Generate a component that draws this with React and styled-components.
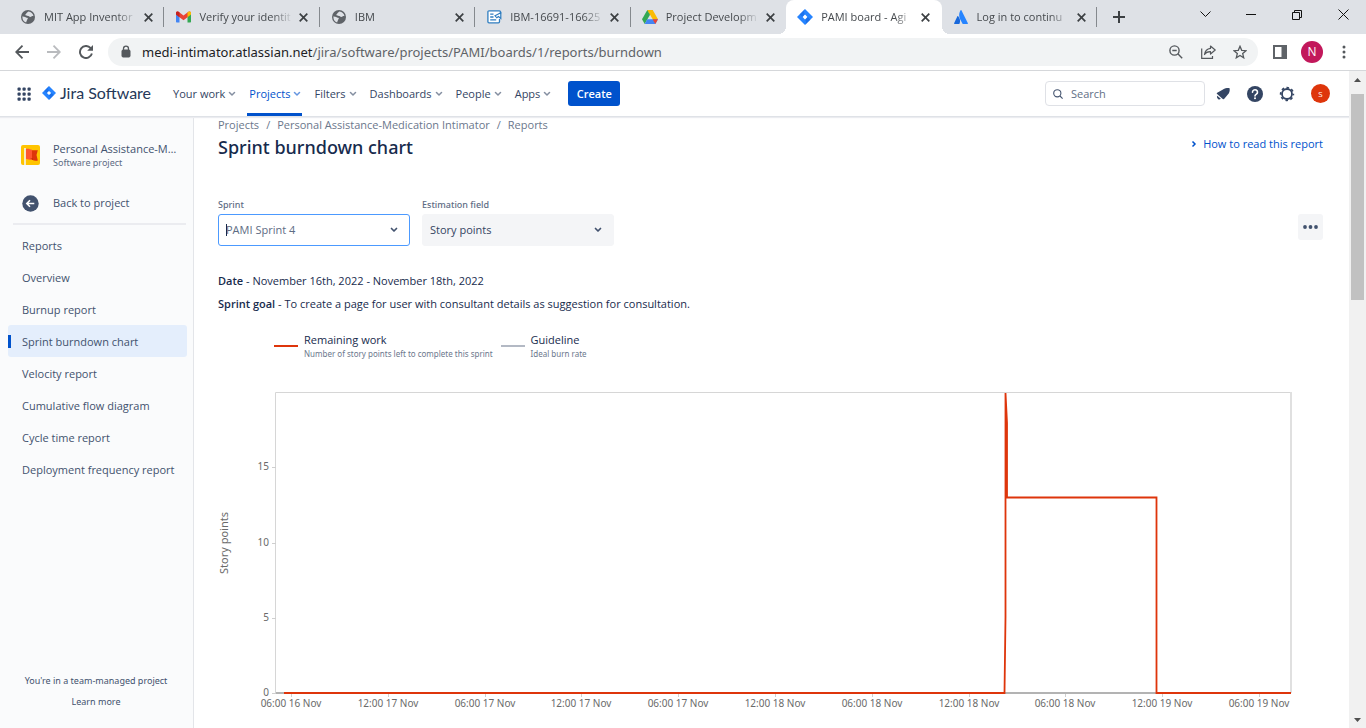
import React from "react";
import styled, { createGlobalStyle, css } from "styled-components";

const wideFont = `"Noto Sans", "Open Sans", sans-serif`;

const GlobalStyle = createGlobalStyle`
  *, *::before, *::after { box-sizing: border-box; }
  body {
    margin: 0;
    font-family: "Open Sans", "Noto Sans", sans-serif;
    font-size: 11px;
    line-height: 16px;
    color: #172b4d;
    background: #fff;
  }
  button, input, select { font: inherit; color: inherit; }
  a { color: inherit; text-decoration: none; }
  svg { display: block; flex: none; }
`;

const plainButton = css`
  display: flex;
  align-items: center;
  justify-content: center;
  padding: 0;
  border: 0;
  background: none;
  flex: none;
`;

const Window = styled.div`
  display: flex;
  flex-direction: column;
  height: 100vh;
  overflow: hidden;
`;

/* ---------- Browser tab strip ---------- */

const TabStrip = styled.header`
  display: flex;
  height: 34px;
  flex: none;
  padding-left: 9px;
  background: #dee1e6;
  color: #45494d;
`;

const TabList = styled.div`
  display: grid;
  grid-template-columns: repeat(7, minmax(0, 1fr));
  flex: 0 1 1088px;
`;

const Tab = styled.div`
  position: relative;
  display: flex;
  align-items: center;
  padding: 0 9px 0 11px;
  background: ${(p) => (p.$active ? "#fff" : "transparent")};
  border-radius: 8px 8px 0 0;
  ${(p) =>
    p.$active &&
    css`
      &::before,
      &::after {
        content: "";
        position: absolute;
        bottom: 0;
        width: 8px;
        height: 8px;
      }
      &::before {
        left: -8px;
        background: radial-gradient(circle at 0 0, transparent 8px, #fff 8px);
      }
      &::after {
        right: -8px;
        background: radial-gradient(circle at 100% 0, transparent 8px, #fff 8px);
      }
    `}
  ${(p) =>
    p.$divider &&
    css`
      &::after {
        content: "";
        position: absolute;
        right: 0;
        top: 7px;
        width: 1px;
        height: 20px;
        background: #85898e;
      }
    `}
`;

const TabIcon = styled.span`
  display: flex;
  justify-content: center;
  width: 16px;
  flex: none;
`;

const TabTitle = styled.span`
  flex: 1;
  min-width: 0;
  margin: 0 4px 0 8px;
  overflow: hidden;
  white-space: nowrap;
  mask-image: linear-gradient(to right, #000 78%, transparent);
`;

const TabClose = styled.button`
  ${plainButton}
  width: 14px;
  height: 14px;
`;

const NewTab = styled.button`
  ${plainButton}
  width: 44px;
`;

const WindowControls = styled.div`
  display: flex;
  margin-left: auto;
`;

const WindowButton = styled.button`
  ${plainButton}
  width: 46px;
  height: 29px;
  color: #111;
`;

/* ---------- Browser toolbar ---------- */

const Toolbar = styled.div`
  display: flex;
  align-items: center;
  height: 37px;
  flex: none;
  padding: 0 6px;
  border-bottom: 1px solid #d5d7da;
  color: #5f6368;
`;

const ToolButton = styled.button`
  ${plainButton}
  width: 32px;
  height: 28px;
  color: ${(p) => (p.$muted ? "#b9bbbe" : "#54585c")};
`;

const AddressBar = styled.div`
  display: flex;
  align-items: center;
  flex: 1;
  min-width: 0;
  height: 28px;
  margin: 0 6px;
  padding: 0 2px 0 12px;
  border-radius: 14px;
  background: #f1f3f4;
`;

const Url = styled.span`
  flex: 1;
  min-width: 0;
  margin-left: 10px;
  overflow: hidden;
  white-space: nowrap;
  font-family: ${wideFont};
  font-size: 13px;
  line-height: 20px;
  b {
    font-weight: 400;
    color: #202124;
  }
`;

const Avatar = styled.span`
  display: flex;
  align-items: center;
  justify-content: center;
  width: ${(p) => p.$size}px;
  height: ${(p) => p.$size}px;
  border-radius: 50%;
  background: ${(p) => p.$color};
  color: #fff;
  font-size: ${(p) => p.$text}px;
  font-weight: 500;
`;

/* ---------- Page frame ---------- */

const Viewport = styled.div`
  display: flex;
  flex: 1;
  min-height: 0;
`;

const Page = styled.div`
  display: flex;
  flex-direction: column;
  flex: 1;
  min-width: 0;
`;

const Scrollbar = styled.div`
  display: flex;
  flex-direction: column;
  align-items: center;
  width: 17px;
  flex: none;
  background: #f1f1f1;
`;

const ScrollArrow = styled.button`
  ${plainButton}
  width: 17px;
  height: 17px;
`;

const ScrollTrack = styled.div`
  flex: 1;
  padding-top: 6px;
`;

const ScrollThumb = styled.div`
  width: 13px;
  height: 206px;
  background: #c1c1c1;
`;

/* ---------- Jira navigation ---------- */

const NavBar = styled.nav`
  position: relative;
  z-index: 1;
  display: flex;
  align-items: center;
  height: 46px;
  flex: none;
  padding: 0 11px 0 16px;
  background: #fff;
  border-bottom: 1px solid #dfe2e7;
  box-shadow: 0 1px 1px #ebecf0;
  color: #344563;
`;

const AppSwitcher = styled.button`
  ${plainButton}
  width: 16px;
`;

const Brand = styled.a`
  display: flex;
  align-items: center;
  gap: 4px;
  margin: 0 18px 0 10px;
  padding-bottom: 2px;
  font-family: Lato, sans-serif;
  font-size: 16px;
  color: #253858;
  white-space: nowrap;
`;

const NavItem = styled.button`
  ${plainButton}
  position: relative;
  gap: 3px;
  height: 45px;
  padding: 0 1px 0 4px;
  margin-right: 8px;
  white-space: nowrap;
  color: ${(p) => (p.$active ? "#0052cc" : "#344563")};
  ${(p) =>
    p.$active &&
    css`
      &::after {
        content: "";
        position: absolute;
        left: 2px;
        right: 0;
        bottom: 0;
        height: 3px;
        background: #0052cc;
      }
    `}
  svg { opacity: 0.6; }
`;

const CreateButton = styled.button`
  ${plainButton}
  width: 52px;
  height: 25px;
  margin-left: 8px;
  border-radius: 3px;
  background: #0052cc;
  color: #fff;
  font-weight: 600;
`;

const SearchBox = styled.label`
  display: flex;
  align-items: center;
  gap: 8px;
  width: 160px;
  height: 25px;
  margin-left: auto;
  margin-right: 2px;
  padding: 0 7px;
  border: 1px solid #dfe1e6;
  border-radius: 4px;
  color: #44546f;
  input {
    flex: 1;
    min-width: 0;
    padding: 0;
    border: 0;
    outline: 0;
    background: none;
  }
  input::placeholder {
    color: #626f86;
    opacity: 1;
  }
`;

const NavIcon = styled.button`
  ${plainButton}
  width: 32px;
  height: 32px;
  color: #344563;
  &:last-child { width: 35px; }
`;

/* ---------- Sidebar ---------- */

const Body = styled.div`
  display: flex;
  flex: 1;
  min-height: 0;
`;

const Sidebar = styled.aside`
  display: flex;
  flex-direction: column;
  width: 194px;
  flex: none;
  padding: 23px 6px 18px 8px;
  background: #fafbfc;
  border-right: 1px solid #e3e5e9;
  color: #42526e;
`;

const Project = styled.div`
  display: flex;
  align-items: center;
  gap: 13px;
  height: 30px;
  padding: 0 10px 0 13px;
`;

const ProjectText = styled.div`
  min-width: 0;
  line-height: 14px;
`;

const ProjectName = styled.div`
  overflow: hidden;
  text-overflow: ellipsis;
  white-space: nowrap;
  font-weight: 500;
  line-height: 16px;
`;

const ProjectKind = styled.div`
  font-family: ${wideFont};
  font-size: 9px;
  line-height: 12px;
  color: #5e6c84;
`;

const BackLink = styled.a`
  display: flex;
  align-items: center;
  gap: 14px;
  height: 32px;
  margin-top: 17px;
  padding-left: 14px;
`;

const Rule = styled.hr`
  width: 173px;
  height: 2px;
  margin: 4px 0 4px 5px;
  border: 0;
  background: #ebecf0;
`;

const sideRow = css`
  padding: 9px 8px 7px 14px;
`;

const SideHeading = styled.h2`
  ${sideRow}
  margin: 0;
  font-size: 11px;
  font-weight: 500;
`;

const SideLink = styled.a`
  ${sideRow}
  position: relative;
  display: block;
  border-radius: 3px;
  background: ${(p) => (p.$active ? "#e4eefc" : "transparent")};
  ${(p) =>
    p.$active &&
    css`
      &::before {
        content: "";
        position: absolute;
        left: 0;
        top: 10px;
        bottom: 9px;
        width: 3px;
        background: #0052cc;
      }
    `}
`;

const SideFooter = styled.footer`
  display: flex;
  flex-direction: column;
  align-items: center;
  gap: 5px;
  margin-top: auto;
  padding-right: 3px;
  font-family: ${wideFont};
  font-size: 9px;
  white-space: nowrap;
`;

/* ---------- Report ---------- */

const Main = styled.main`
  flex: 1;
  min-width: 0;
  padding: 0 24px;
  overflow: hidden;
`;

const Crumbs = styled.div`
  display: flex;
  gap: 7px;
  color: #6b778c;
`;

const TitleRow = styled.div`
  display: flex;
  align-items: center;
  justify-content: space-between;
  margin-top: 2px;
  padding-right: 2px;
`;

const Title = styled.h1`
  margin: 0;
  font-family: ${wideFont};
  font-size: 18px;
  font-weight: 500;
  line-height: 24px;
`;

const HelpLink = styled.button`
  ${plainButton}
  gap: 6px;
  height: 18px;
  align-self: flex-start;
  color: #0052cc;
`;

const Filters = styled.div`
  display: flex;
  align-items: flex-end;
  gap: 12px;
  margin-top: 38px;
`;

const Field = styled.div`
  width: 192px;
  label {
    display: block;
    font-family: ${wideFont};
    font-size: 9px;
    font-weight: 500;
    line-height: 16px;
    color: #5e6c84;
  }
`;

const SelectWrap = styled.div`
  position: relative;
  display: flex;
  align-items: center;
  margin-top: 1px;
  select {
    appearance: none;
    width: 100%;
    height: 32px;
    padding: 0 28px 0 7px;
    border: 1px solid ${(p) => (p.$focused ? "#4c9aff" : "#f4f5f7")};
    border-radius: 3px;
    outline: 0;
    background: ${(p) => (p.$focused ? "#fff" : "#f4f5f7")};
    color: ${(p) => (p.$focused ? "#5e6c84" : "#344563")};
  }
  svg {
    position: absolute;
    right: 12px;
    color: #42526e;
    pointer-events: none;
  }
`;

const Caret = styled.span`
  position: absolute;
  left: 8px;
  width: 1px;
  height: 12px;
  background: #172b4d;
`;

const MoreButton = styled.button`
  ${plainButton}
  width: 25px;
  height: 26px;
  margin: 0 2px 6px auto;
  border-radius: 3px;
  background: #f4f5f7;
`;

const Fact = styled.p`
  margin: ${(p) => p.$top}px 0 0;
  b { font-weight: 600; }
`;

const Legend = styled.ul`
  display: flex;
  gap: 8px;
  margin: 20px 0 0;
  padding: 0 0 0 56px;
  list-style: none;
`;

const LegendItem = styled.li`
  display: flex;
  gap: 6px;
  &::before {
    content: "";
    width: 24px;
    height: 2px;
    margin-top: 13px;
    background: ${(p) => p.$color};
  }
`;

const LegendName = styled.div`
  font-weight: 500;
`;

const LegendNote = styled.div`
  font-family: ${wideFont};
  font-size: 8px;
  line-height: 12px;
  color: #6b778c;
`;

const ChartSvg = styled.svg`
  width: 100%;
  height: auto;
  margin-top: 25px;
  font-family: ${wideFont};
  font-size: 10px;
  fill: #6a6a6a;
`;

/* ---------- Drawings ---------- */

const Globe = () => (
  <svg width="14" height="14" viewBox="0 0 14 14">
    <circle cx="7" cy="7" r="7" fill="#5f6368" />
    <path d="M7.6 1.6c-1 .3-1.2 1-2 1.3-.5.3-.2 1-.9 1.3-.8.3-.3 1.3.5 1.2.9-.1 1.3.7 2.2.6.8 0 .9 1.1 1.8 1 1.3-.2 1.5-1 2.6-.9.6 0 .8.5.7 1.2A5.6 5.6 0 0 0 9.300 1.900z" fill="#dee1e6" />
    <path d="M1.500 6.200c1 .1 1.500.7 2.500.7s1.300.8 2.200.9c.8.1.8 1 .2 1.500-.5.5-.2 1.100-.8 1.700l-.5 1.400A5.600 5.600 0 0 1 1.500 6.200z" fill="#dee1e6" />
  </svg>
);

const Gmail = () => (
  <svg width="15" height="12" viewBox="0 0 15 12">
    <path d="M0 2v8.500c0 .6.400 1 1 1h2.500V4z" fill="#4285f4" />
    <path d="M15 2v8.500c0 .6-.400 1-1 1h-2.500V4z" fill="#34a853" />
    <path d="M0 2C0 .5 1.500 0 2.600.8L7.500 4.500l4.900-3.700C13.500 0 15 .5 15 2l-3.500 4.200-4 3-4-3L0 3.500z" fill="#ea4335" />
    <path d="M0 2v1.500l3.500 2.700V1.500C2 0 0 .5 0 2z" fill="#c5221f" />
    <path d="M15 2v1.500l-3.500 2.700V1.500C13 0 15 .5 15 2z" fill="#fbbc04" />
  </svg>
);

const DocIcon = () => (
  <svg width="15" height="14" viewBox="0 0 15 14" fill="none" stroke="#2f7dc0" strokeWidth="1.300">
    <path d="M13.500 4V1.900c0-.7-.4-1.100-1.100-1.100H2C1.300.8.900 1.200.9 1.900v9.900c0 .7.400 1.100 1.100 1.100h9.400c.7 0 1.100-.4 1.100-1.100V9" fill="#fff" />
    <path d="M3.200 4.200h3.300M3.200 7h3.300M3.200 9.800h6" />
    <path d="M8 5.800 13.800 2.800v5.600L11.500 6.500 9.800 7.800z" strokeWidth="1.200" />
  </svg>
);

const Drive = () => (
  <svg width="16" height="14" viewBox="0 0 16 14">
    <path d="M5.300 0h5.400L8 4.800z" fill="#188038" />
    <path d="M5.300 0 8 4.700 2.700 14 0 9.300z" fill="#34a853" />
    <path d="M10.700 0 16 9.300h-5.300L5.300 0z" fill="#fbbc04" />
    <path d="M5.300 9.300H16L13.300 14H2.700z" fill="#4285f4" />
    <path d="M10.600 9.300H16L13.300 14z" fill="#ea4335" />
  </svg>
);

const JiraMark = ({ size = 14 }) => (
  <svg width={size} height={size} viewBox="0 0 14 14">
    <path d="M7 0 14 7 7 14 0 7z" fill="#2684ff" />
    <path d="M7 0c-1.300 1.500-1.200 3.200 0 4.600L4.600 7 2.300 4.700z" fill="#0d5bd6" opacity=".4" />
    <path d="M7 14c1.300-1.500 1.200-3.200 0-4.600L9.400 7l2.300 2.300z" fill="#0d5bd6" opacity=".5" />
    <path d="M7 4.900 9.100 7 7 9.100 4.900 7z" fill="#fff" />
  </svg>
);

const Atlassian = () => (
  <svg width="14" height="14" viewBox="0 0 14 14">
    <path d="M4.200 6.300c-.2-.3-.6-.3-.8 0L.1 13.300c-.1.300.1.600.4.600h4.700c.2 0 .300-.1.400-.3 1-2.100.4-5.300-1.400-7.300z" fill="#1868db" />
    <path d="M6.600.3C4.700 3.300 4.800 6.600 6.100 9.200l2.300 4.400c.1.200.200.300.400.300h4.700c.3 0 .5-.3.400-.6L7.400.3c-.2-.400-.6-.400-.8 0z" fill="#2684ff" />
  </svg>
);

const Cross = () => (
  <svg width="9" height="9" viewBox="0 0 9 9" stroke="#3c4043" strokeWidth="1.700">
    <path d="m.7.700 7.600 7.600M8.300.700.700 8.300" />
  </svg>
);

const Chevron = ({ width = 1.7 }) => (
  <svg width="8" height="6" viewBox="0 0 8 6" fill="none" stroke="currentColor" strokeWidth={width} strokeLinecap="round" strokeLinejoin="round">
    <path d="m1.500 1.500 2.500 2.500 2.500-2.500" />
  </svg>
);

const GearIcon = () => (
  <svg width="16" height="16" viewBox="0 0 16 16" fill="none" stroke="#344563">
    <circle cx="8" cy="8" r="5" strokeWidth="1.800" />
    <circle cx="8" cy="8" r="6.400" strokeWidth="1.600" strokeDasharray="2.600 2.427" strokeDashoffset="1.300" />
  </svg>
);

/* ---------- Chart ---------- */

const PLOT = { left: 58, right: 1073, top: 7, bottom: 308 };
const xLabels = [
  "06:00 16 Nov", "12:00 17 Nov", "06:00 17 Nov", "12:00 17 Nov", "06:00 17 Nov", "12:00 18 Nov",
  "06:00 18 Nov", "12:00 18 Nov", "06:00 18 Nov", "12:00 19 Nov", "06:00 19 Nov",
];
const yLabels = [0, 5, 10, 15];

const tickX = (i) => Math.round(73 + i * 96.8);
const tickY = (v) => Math.round(PLOT.bottom - v * 15.05);

function BurndownChart() {
  return (
    <ChartSvg viewBox="0 0 1107 330" role="img" aria-label="Sprint burndown chart">
      <path
        d={`M${PLOT.left - 1}.5 ${PLOT.bottom}V${PLOT.top}.5H${PLOT.right}`}
        fill="none"
        stroke="#d6d6d6"
      />
      <path d={`M${PLOT.right} ${PLOT.top}V${PLOT.bottom}`} stroke="#e0e0e0" strokeWidth="2" />
      <path d="M58 308H1073" stroke="#b3b3b3" strokeWidth="2" />
      {yLabels.map((v) => (
        <g key={v}>
          <path d={`M54 ${tickY(v)}.5H58`} stroke="#cfcfcf" />
          <text x="51" y={tickY(v) + 3} textAnchor="end">{v}</text>
        </g>
      ))}
      {xLabels.map((label, i) => (
        <g key={i}>
          <path d={`M${tickX(i)}.5 309V312`} stroke="#cfcfcf" />
          <text x={tickX(i)} y="322" textAnchor="middle">{label}</text>
        </g>
      ))}
      <text transform="translate(10 158) rotate(-90)" textAnchor="middle" fontSize="11">Story points</text>
      <path
        d="M66 308H786.500L787.500 232V8L789 38V112.500H938.500V308H1073"
        fill="none"
        stroke="#de350b"
        strokeWidth="1.800"
      />
    </ChartSvg>
  );
}

const tabs = [
  { title: "MIT App Inventor", icon: <Globe />, divider: true },
  { title: "Verify your identit", icon: <Gmail />, divider: true },
  { title: "IBM", icon: <Globe />, divider: true },
  { title: "IBM-16691-16625", icon: <DocIcon />, divider: true },
  { title: "Project Developm", icon: <Drive /> },
  { title: "PAMI board - Agi", icon: <JiraMark size={16} />, active: true },
  { title: "Log in to continu", icon: <Atlassian />, divider: true },
];

const navItems = ["Your work", "Projects", "Filters", "Dashboards", "People", "Apps"];

const reports = [
  "Overview",
  "Burnup report",
  "Sprint burndown chart",
  "Velocity report",
  "Cumulative flow diagram",
  "Cycle time report",
  "Deployment frequency report",
];

export default function App() {
  return (
    <Window>
      <GlobalStyle />
      <TabStrip>
        <TabList>
          {tabs.map((t) => (
            <Tab key={t.title} $active={t.active} $divider={t.divider}>
              <TabIcon>{t.icon}</TabIcon>
              <TabTitle>{t.title}</TabTitle>
              <TabClose aria-label="Close tab"><Cross /></TabClose>
            </Tab>
          ))}
        </TabList>
        <NewTab aria-label="New tab">
          <svg width="12" height="12" viewBox="0 0 12 12" stroke="#3c4043" strokeWidth="2"><path d="M6 0v12M0 6h12" /></svg>
        </NewTab>
        <WindowControls>
          <WindowButton aria-label="Search tabs">
            <svg width="11" height="7" viewBox="0 0 11 7" fill="none" stroke="currentColor"><path d="m.5.500 5 5 5-5" /></svg>
          </WindowButton>
          <WindowButton aria-label="Minimize">
            <svg width="10" height="1" viewBox="0 0 10 1"><path d="M0 0h10v1H0z" fill="currentColor" /></svg>
          </WindowButton>
          <WindowButton aria-label="Restore">
            <svg width="10" height="10" viewBox="0 0 10 10" fill="none" stroke="currentColor"><path d="M.5 2.500h7v7h-7zM2.500 2.500v-2h7v7h-2" /></svg>
          </WindowButton>
          <WindowButton aria-label="Close">
            <svg width="11" height="11" viewBox="0 0 11 11" stroke="currentColor"><path d="m.5.500 10 10M10.500.500l-10 10" /></svg>
          </WindowButton>
        </WindowControls>
      </TabStrip>

      <Toolbar>
        <ToolButton aria-label="Back">
          <svg width="14" height="14" viewBox="0 0 14 14" fill="none" stroke="currentColor" strokeWidth="1.800"><path d="M14 7H1.500M7.500.700 1.200 7l6.300 6.300" /></svg>
        </ToolButton>
        <ToolButton aria-label="Forward" $muted>
          <svg width="14" height="14" viewBox="0 0 14 14" fill="none" stroke="currentColor" strokeWidth="1.800"><path d="M0 7h12.500M6.500.700 12.800 7l-6.300 6.300" /></svg>
        </ToolButton>
        <ToolButton aria-label="Reload">
          <svg width="14" height="14" viewBox="0 0 14 14" fill="none" stroke="currentColor" strokeWidth="1.900"><path d="M12.900 8.500A6.050 6.050 0 1 1 11.500 2.900L13 4.500" /><path d="M14 0v5.800H8.200z" fill="currentColor" stroke="none" /></svg>
        </ToolButton>
        <AddressBar>
          <svg width="12" height="14" viewBox="0 0 12 14"><path d="M3 5h6c.6 0 1 .4 1 1v5c0 .6-.4 1-1 1H3c-.6 0-1-.4-1-1V6c0-.6.400-1 1-1z" fill="#54585c" stroke="#54585c" /><path d="M3.500 5.500V3.700a2.500 2.500 0 0 1 5 0v1.800" fill="none" stroke="#54585c" strokeWidth="1.300" /></svg>
          <Url><b>medi-intimator.atlassian.net</b>/jira/software/projects/PAMI/boards/1/reports/burndown</Url>
          <ToolButton aria-label="Zoom">
            <svg width="14" height="14" viewBox="0 0 14 14" fill="none" stroke="currentColor" strokeWidth="1.400"><circle cx="5.500" cy="5.500" r="4.600" /><path d="M3.300 5.500h4.400M8.800 8.800l4.400 4.400" /></svg>
          </ToolButton>
          <ToolButton aria-label="Share">
            <svg width="15" height="14" viewBox="0 0 15 14" fill="none" stroke="currentColor" strokeWidth="1.200"><path d="M.7 3.500v9.800h10.800V11" /><path d="M9.500 1 14.200 5 9.500 9V6.700C6.500 6.600 4.700 7.500 3.500 9.500 4 6.200 6 3.800 9.500 3.400z" strokeLinejoin="round" /></svg>
          </ToolButton>
          <ToolButton aria-label="Bookmark">
            <svg width="14" height="14" viewBox="0 0 14 14" fill="none" stroke="currentColor" strokeWidth="1.300"><path d="m7 1.300 1.700 4 4.300.4-3.300 2.900 1 4.200L7 10.500l-3.700 2.300 1-4.200L1 5.700l4.300-.4z" /></svg>
          </ToolButton>
        </AddressBar>
        <ToolButton aria-label="Side panel">
          <svg width="14" height="14" viewBox="0 0 14 14"><path d="M0 0h14v14H0zM2 2v10h6.500V2z" fill="#5f6368" fillRule="evenodd" /></svg>
        </ToolButton>
        <ToolButton aria-label="Profile"><Avatar $size={22} $color="#c2185b" $text={12}>N</Avatar></ToolButton>
        <ToolButton aria-label="Menu">
          <svg width="4" height="14" viewBox="0 0 4 14" fill="currentColor"><circle cx="2" cy="2" r="1.500" /><circle cx="2" cy="7" r="1.500" /><circle cx="2" cy="12" r="1.500" /></svg>
        </ToolButton>
      </Toolbar>

      <Viewport>
        <Page>
          <NavBar>
            <AppSwitcher aria-label="Switch to">
              <svg width="14" height="14" viewBox="0 0 14 14" fill="#344563">
                {[0, 5, 10].map((y) => [0, 5, 10].map((x) => <rect key={`${x}-${y}`} x={x + 0.5} y={y + 0.500} width="3.200" height="3.200" rx="1" />))}
              </svg>
            </AppSwitcher>
            <Brand href="#"><JiraMark />Jira Software</Brand>
            {navItems.map((name) => (
              <NavItem key={name} $active={name === "Projects"}>{name}<Chevron width={1.500} /></NavItem>
            ))}
            <CreateButton>Create</CreateButton>
            <SearchBox>
              <svg width="10" height="10" viewBox="0 0 10 10" fill="none" stroke="currentColor" strokeWidth="1.100"><circle cx="4.300" cy="4.300" r="3.600" /><path d="m7 7 2.600 2.600" /></svg>
              <input type="text" placeholder="Search" aria-label="Search" />
            </SearchBox>
            <NavIcon aria-label="Notifications">
              <svg width="14" height="14" viewBox="0 0 14 14" fill="currentColor"><path d="M13.600 1.200c.3 2 0 3.500-.7 5L8.300 11.800c-.4.500-1 .5-1.500.1L1.100 7.100c-.5-.4-.4-1 .1-1.300L7 2.400C9 1.400 11.500.9 13.600 1.200z" /><path d="M1.200 8.700 4.800 11.800c-1 .8-2 .8-2.800.1S.6 10 1.200 8.700z" /></svg>
            </NavIcon>
            <NavIcon aria-label="Help">
              <svg width="16" height="16" viewBox="0 0 16 16"><circle cx="8" cy="8" r="8" fill="#344563" /><path d="M5.500 6.300a2.500 2.400 0 1 1 3.900 1.900C8.500 8.800 8 9 8 10" fill="none" stroke="#fff" strokeWidth="1.600" strokeLinecap="round" /><circle cx="8" cy="12.300" r="1" fill="#fff" /></svg>
            </NavIcon>
            <NavIcon aria-label="Settings"><GearIcon /></NavIcon>
            <NavIcon aria-label="Account"><Avatar $size={19} $color="#de350b" $text={8}>S</Avatar></NavIcon>
          </NavBar>

          <Body>
            <Sidebar>
              <Project>
                <svg width="19" height="20" viewBox="0 0 19 20">
                  <rect width="19" height="20" rx="2" fill="#ffc400" />
                  <path d="M4.800 4c2.500-.8 4 .2 6.200.8v10c-2.500.2-4-1-6.200-.8z" fill="#ff5630" />
                  <path d="M11 5.300h5.800L15.500 10l1.300 5.500c-2.200.4-4 .1-5.800-.7z" fill="#de350b" />
                  <path d="M9 13.500h3v1.300z" fill="#bf2600" />
                  <path d="M3.200 3h1.600v17H3.200z" fill="#f4f5f7" />
                </svg>
                <ProjectText>
                  <ProjectName>Personal Assistance-Medication Intimator</ProjectName>
                  <ProjectKind>Software project</ProjectKind>
                </ProjectText>
              </Project>
              <BackLink href="#">
                <svg width="17" height="17" viewBox="0 0 17 17"><circle cx="8.500" cy="8.500" r="8.200" fill="#42526e" /><path d="M12.300 8.500H5M8 5.300 4.800 8.500 8 11.700" fill="none" stroke="#fff" strokeWidth="1.600" /></svg>
                Back to project
              </BackLink>
              <Rule />
              <SideHeading>Reports</SideHeading>
              {reports.map((r) => (
                <SideLink key={r} href="#" $active={r === "Sprint burndown chart"}>{r}</SideLink>
              ))}
              <SideFooter>
                <span>You're in a team-managed project</span>
                <a href="#">Learn more</a>
              </SideFooter>
            </Sidebar>

            <Main>
              <Crumbs>
                <a href="#">Projects</a><span>/</span>
                <a href="#">Personal Assistance-Medication Intimator</a><span>/</span>
                <a href="#">Reports</a>
              </Crumbs>
              <TitleRow>
                <Title>Sprint burndown chart</Title>
                <HelpLink>
                  <svg width="6" height="8" viewBox="0 0 6 8" fill="none" stroke="currentColor" strokeWidth="1.500"><path d="m1.500 1.500 2.500 2.500-2.500 2.500" /></svg>
                  How to read this report
                </HelpLink>
              </TitleRow>
              <Filters>
                <Field>
                  <label htmlFor="sprint">Sprint</label>
                  <SelectWrap $focused>
                    <select id="sprint"><option>PAMI Sprint 4</option></select>
                    <Caret />
                    <Chevron />
                  </SelectWrap>
                </Field>
                <Field>
                  <label htmlFor="estimation">Estimation field</label>
                  <SelectWrap>
                    <select id="estimation"><option>Story points</option></select>
                    <Chevron />
                  </SelectWrap>
                </Field>
                <MoreButton aria-label="More actions">
                  <svg width="15" height="4" viewBox="0 0 15 4" fill="#42526e"><circle cx="2" cy="2" r="1.900" /><circle cx="7.500" cy="2" r="1.900" /><circle cx="13" cy="2" r="1.900" /></svg>
                </MoreButton>
              </Filters>
              <Fact $top={27}><b>Date</b> - November 16th, 2022 - November 18th, 2022</Fact>
              <Fact $top={7}><b>Sprint goal</b> - To create a page for user with consultant details as suggestion for consultation.</Fact>
              <Legend>
                <LegendItem $color="#de350b">
                  <div>
                    <LegendName>Remaining work</LegendName>
                    <LegendNote>Number of story points left to complete this sprint</LegendNote>
                  </div>
                </LegendItem>
                <LegendItem $color="#b3b9c4">
                  <div>
                    <LegendName>Guideline</LegendName>
                    <LegendNote>Ideal burn rate</LegendNote>
                  </div>
                </LegendItem>
              </Legend>
              <BurndownChart />
            </Main>
          </Body>
        </Page>
        <Scrollbar>
          <ScrollArrow aria-label="Scroll up"><svg width="7" height="4" viewBox="0 0 7 4"><path d="M0 4 3.500 0 7 4z" fill="#505050" /></svg></ScrollArrow>
          <ScrollTrack><ScrollThumb /></ScrollTrack>
          <ScrollArrow aria-label="Scroll down"><svg width="7" height="4" viewBox="0 0 7 4"><path d="M0 0h7L3.500 4z" fill="#505050" /></svg></ScrollArrow>
        </Scrollbar>
      </Viewport>
    </Window>
  );
}
